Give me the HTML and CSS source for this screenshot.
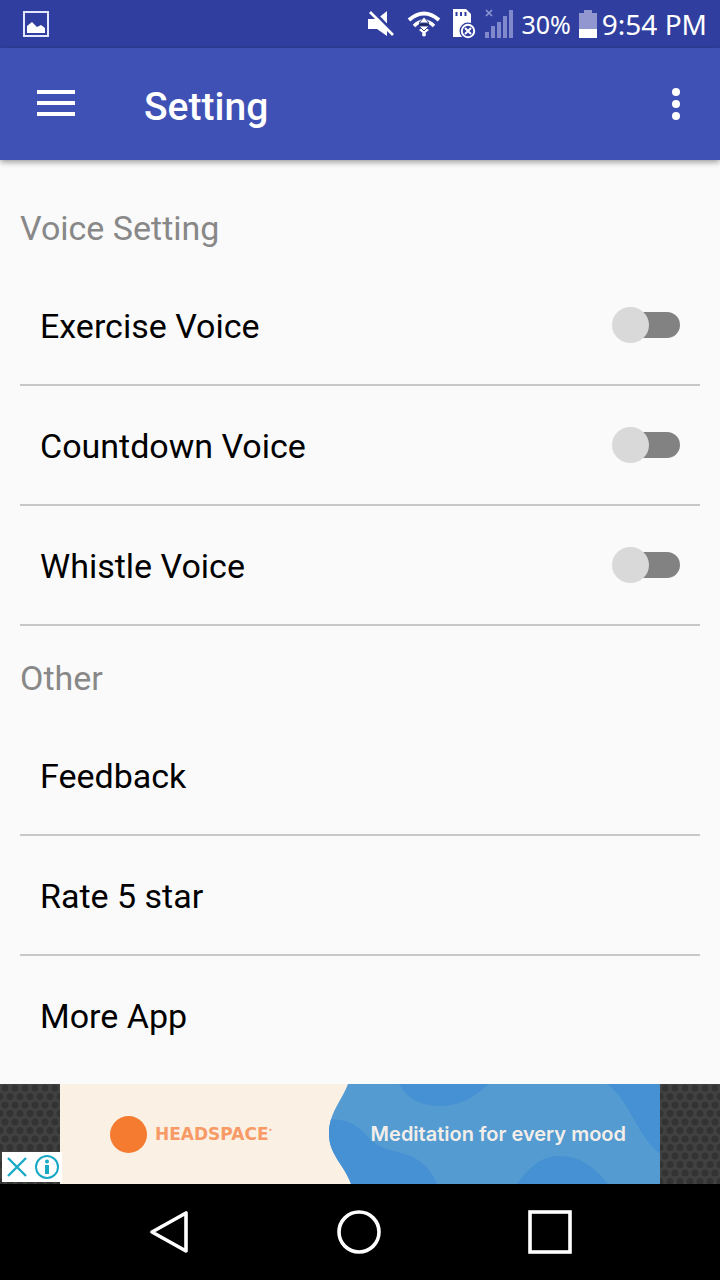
FILE: index.html
```html
<!DOCTYPE html>
<html lang="en">
<head>
<meta charset="utf-8">
<meta name="viewport" content="width=device-width, initial-scale=1">
<title>Setting</title>
<link rel="stylesheet" href="styles.css">
</head>
<body>
<div class="screen">
  <div class="status-bar">
    <svg class="status-photo" width="26" height="26" viewBox="0 0 26 26" aria-hidden="true">
      <rect x="1" y="1" width="24" height="24" fill="none" stroke="#e4e8ff" stroke-width="2"/>
      <path d="M4 22v-7l5-4 5 5 4-2 4 3v5z" fill="#fff"/>
    </svg>
    <div class="status-icons">
      <svg width="28" height="28" viewBox="0 0 28 28" aria-hidden="true">
        <path d="M1 9h9l10-8v25l-10-7H1z" fill="#fff"/>
        <path d="M5 0l23 24" stroke="#303f9f" stroke-width="3"/>
        <path d="M3 2l23 23" stroke="#fff" stroke-width="2.6"/>
      </svg>
      <svg class="status-wifi" width="34" height="26" viewBox="0 0 34 26" aria-hidden="true">
        <path d="M2 9Q17-4 32 9" fill="none" stroke="#fff" stroke-width="4"/>
        <path d="M7 15q10-10 20 0" fill="none" stroke="#fff" stroke-width="3.6"/>
        <path d="M12 19q5-5 10 0l-5 4z" fill="#fff"/>
        <path d="M17 6l-5 6h10zM12 15h10l-5 5z" fill="#fff" stroke="#3a4694" stroke-width="1"/>
        <path d="M12 13.500h10" stroke="#1b245c" stroke-width="2"/>
        <circle cx="17" cy="23.500" r="2" fill="#fff"/>
      </svg>
      <svg width="24" height="30" viewBox="0 0 24 30" aria-hidden="true">
        <path d="M0 0h13l5 5v23H0z" fill="#fff"/>
        <path d="M3.500 3v4M8 3v4M12.500 3v4" stroke="#303f9f" stroke-width="2"/>
        <circle cx="15" cy="22" r="8.500" fill="#303f9f"/>
        <circle cx="15" cy="22" r="6.200" fill="#303f9f" stroke="#fff" stroke-width="2"/>
        <path d="M12 19l6 6M18 19l-6 6" stroke="#fff" stroke-width="2"/>
      </svg>
      <svg width="28" height="30" viewBox="0 0 28 30" aria-hidden="true">
        <path d="M0 23h4v6H0zM6 17h4v12H6zM12 13h4v16h-4zM18 7h4v22h-4zM24 1h4v28h-4z" fill="#7f89cc"/>
        <path d="M1 1l6 6M7 1L1 7" stroke="#8f98d4" stroke-width="1.600"/>
      </svg>
      <span class="status-battery-text">30%</span>
      <svg width="18" height="28" viewBox="0 0 18 28" aria-hidden="true">
        <path d="M0 3h5V0h8v3h5v16H0z" fill="#9298cf"/>
        <path d="M0 19h18v9H0z" fill="#fff"/>
      </svg>
    </div>
    <span class="status-time">9:54 PM</span>
  </div>

  <header class="app-bar">
    <button class="icon-button" type="button" aria-label="Open menu">
      <svg width="38" height="28" viewBox="0 0 38 28"><path d="M0 2h38M0 13h38M0 24h38" stroke="#fff" stroke-width="4"/></svg>
    </button>
    <h1 class="app-title">Setting</h1>
    <button class="icon-button" type="button" aria-label="More options">
      <svg width="8" height="32" viewBox="0 0 8 32"><g fill="#fff"><circle cx="4" cy="4" r="4"/><circle cx="4" cy="16" r="4"/><circle cx="4" cy="28" r="4"/></g></svg>
    </button>
  </header>

  <main class="settings">
    <h2 class="section-title">Voice Setting</h2>
    <ul class="setting-list">
      <li class="setting-row"><label class="setting-item"><span class="setting-name">Exercise Voice</span><input class="switch" type="checkbox" role="switch"></label></li>
      <li class="setting-row"><label class="setting-item"><span class="setting-name">Countdown Voice</span><input class="switch" type="checkbox" role="switch"></label></li>
      <li class="setting-row"><label class="setting-item"><span class="setting-name">Whistle Voice</span><input class="switch" type="checkbox" role="switch"></label></li>
    </ul>
    <h2 class="section-title">Other</h2>
    <ul class="setting-list setting-list-open">
      <li class="setting-row"><a class="setting-item" href="#feedback"><span class="setting-name">Feedback</span></a></li>
      <li class="setting-row"><a class="setting-item" href="#rate"><span class="setting-name">Rate 5 star</span></a></li>
      <li class="setting-row"><a class="setting-item" href="#more"><span class="setting-name">More App</span></a></li>
    </ul>
  </main>

  <aside class="ad">
    <svg class="ad-texture" aria-hidden="true">
      <defs><pattern id="hex" width="10" height="17" patternUnits="userSpaceOnUse">
        <rect width="10" height="17" fill="#414141"/>
        <g fill="#333"><circle cx="5" cy="4" r="3.500"/><circle cx="0" cy="12.500" r="3.500"/><circle cx="10" cy="12.500" r="3.500"/></g>
      </pattern></defs>
      <rect width="100%" height="100%" fill="url(#hex)"/>
    </svg>
    <a class="ad-banner" href="#headspace">
      <svg class="ad-art" viewBox="0 0 600 100" preserveAspectRatio="none" aria-hidden="true">
        <rect width="600" height="100" fill="#fbf0e4"/>
        <clipPath id="wave"><path d="M288 0C281 18 269 29 269 50S284 80 291 100H600V0z"/></clipPath>
        <g clip-path="url(#wave)">
          <rect x="260" width="340" height="100" fill="#549bd1"/>
          <g fill="#4591d3">
            <path d="M260 36c24-3 36 3 48 17 12 14 30 13 45 20 13 7 19 15 24 27H260z"/>
            <path d="M339 0c8 15 23 22 41 22S415 14 428 0z"/>
            <path d="M457 100c13-18 25-28 43-28s34 10 48 28z"/>
            <path d="M547 0c25 20 28 49 53 70V0z"/>
          </g>
        </g>
      </svg>
      <span class="ad-brand"><span class="ad-dot"></span>HEADSPACE<span class="ad-mark">•</span></span>
      <span class="ad-tagline">Meditation for every mood</span>
    </a>
    <div class="ad-controls">
      <button class="ad-control" type="button" aria-label="Close ad">
        <svg width="20" height="20" viewBox="0 0 20 20"><path d="M1 1l18 18M19 1L1 19" stroke="#18a9c5" stroke-width="2.400"/></svg>
      </button>
      <button class="ad-control" type="button" aria-label="Ad information">
        <svg width="24" height="24" viewBox="0 0 24 24"><circle cx="12" cy="12" r="11" fill="none" stroke="#18a9c5" stroke-width="2"/><circle cx="12" cy="6.500" r="2" fill="#18a9c5"/><path d="M12 10v9" stroke="#18a9c5" stroke-width="4"/></svg>
      </button>
    </div>
  </aside>

  <nav class="nav-bar" aria-label="System navigation">
    <button class="icon-button" type="button" aria-label="Back">
      <svg width="42" height="44" viewBox="0 0 42 44"><path d="M4 22L38 3v38z" fill="none" stroke="#fff" stroke-width="3.600" stroke-linejoin="round"/></svg>
    </button>
    <button class="icon-button" type="button" aria-label="Home">
      <svg width="44" height="44" viewBox="0 0 44 44"><circle cx="22" cy="22" r="20" fill="none" stroke="#fff" stroke-width="3.600"/></svg>
    </button>
    <button class="icon-button" type="button" aria-label="Recent apps">
      <svg width="44" height="44" viewBox="0 0 44 44"><rect x="2" y="2" width="40" height="40" fill="none" stroke="#fff" stroke-width="3.600"/></svg>
    </button>
  </nav>
</div>
</body>
</html>
```
FILE: styles.css
```css
* {
  box-sizing: border-box;
}

body {
  margin: 0;
  background: #fafafa;
  color: #000;
  font-family: Roboto, sans-serif;
}

svg {
  display: block;
  flex: none;
}

button {
  padding: 0;
  border: 0;
  background: none;
  cursor: pointer;
}

a {
  color: inherit;
  text-decoration: none;
}

.screen {
  display: flex;
  flex-direction: column;
  min-height: 100vh;
}

.status-bar {
  display: flex;
  align-items: center;
  gap: 5px;
  height: 48px;
  padding: 0 13px 0 23px;
  background: #303f9f;
  color: #fff;
  font-family: "Noto Sans", sans-serif;
}

.status-icons {
  display: flex;
  align-items: center;
  gap: 8px;
  margin-left: auto;
}

.status-wifi {
  margin: 0 4px;
}

.status-battery-text {
  font-size: 25px;
  line-height: 48px;
}

.status-time {
  font-size: 28px;
  line-height: 48px;
}

.app-bar {
  display: flex;
  align-items: center;
  height: 112px;
  padding: 0 40px 0 37px;
  background: #3f51b5;
  color: #fff;
  box-shadow: 0 2px 6px rgba(0, 0, 0, 0.4);
}

.icon-button {
  display: grid;
  place-items: center;
}

.app-title {
  flex: 1;
  margin: 0;
  padding: 6px 0 0 69px;
  font-size: 39px;
  font-weight: 500;
  line-height: 48px;
}

.settings {
  flex: 1;
  padding: 16px 20px 0;
}

.section-title {
  margin: 0;
  padding: 32px 0 18px;
  color: #888;
  font-size: 34px;
  font-weight: 400;
  line-height: 40px;
}

.setting-list {
  margin: 0;
  padding: 0;
  list-style: none;
}

.setting-row {
  border-bottom: 2px solid #c8c8c8;
}

.setting-list-open .setting-row:last-child {
  border-bottom: 0;
}

.setting-item {
  display: flex;
  align-items: center;
  justify-content: space-between;
  min-height: 118px;
  padding: 0 20px;
  font-size: 34px;
  line-height: 40px;
}

.setting-name {
  padding-top: 2px;
}

.switch {
  appearance: none;
  display: flex;
  align-items: center;
  position: relative;
  width: 68px;
  height: 36px;
  margin: 0;
  cursor: pointer;
}

.switch::before {
  content: "";
  width: 60px;
  height: 26px;
  margin-left: 8px;
  border-radius: 13px;
  background: #828282;
}

.switch::after {
  content: "";
  position: absolute;
  left: 0;
  width: 37px;
  height: 36px;
  border-radius: 50%;
  background: #d9d9d9;
}

.switch:checked::after {
  right: 0;
  left: auto;
  background: #3f51b5;
}

.ad {
  position: relative;
  display: flex;
  justify-content: center;
  height: 100px;
}

.ad-texture,
.ad-art {
  position: absolute;
  inset: 0;
  width: 100%;
  height: 100%;
}

.ad-banner {
  position: relative;
  display: flex;
  align-items: center;
  justify-content: space-between;
  width: 600px;
  padding: 0 34px 0 50px;
  font-family: Inter, sans-serif;
}

.ad-brand {
  position: relative;
  display: flex;
  align-items: center;
  color: #f79a66;
  font-family: "DejaVu Sans", sans-serif;
  font-size: 17px;
  font-weight: 700;
  line-height: 20px;
}

.ad-dot {
  width: 37px;
  height: 37px;
  margin-right: 8px;
  border-radius: 50%;
  background: #f47b30;
}

.ad-mark {
  padding-bottom: 8px;
  font-size: 6px;
}

.ad-tagline {
  position: relative;
  color: #f3eee9;
  font-size: 20px;
  font-weight: 600;
}

.ad-controls {
  position: absolute;
  bottom: 2px;
  left: 2px;
  display: flex;
  align-items: center;
  gap: 8px;
  height: 30px;
  padding: 0 3px 0 5px;
  background: #fff;
}

.nav-bar {
  display: flex;
  align-items: center;
  justify-content: space-between;
  height: 96px;
  padding: 0 148px;
  background: #000;
}
```
